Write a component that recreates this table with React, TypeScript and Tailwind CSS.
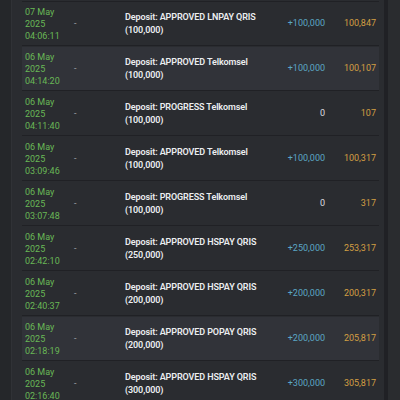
import React from 'react';

type Row = {
  day: string;
  time: string;
  desc: string;
  nominal: string;
  amount: string;
  balance: string;
  active?: boolean;
};

const rows: Row[] = [
  { day: '07 May', time: '04:06:11', desc: 'Deposit: APPROVED LNPAY QRIS', nominal: '(100,000)', amount: '+100,000', balance: '100,847' },
  { day: '06 May', time: '04:14:20', desc: 'Deposit: APPROVED Telkomsel', nominal: '(100,000)', amount: '+100,000', balance: '100,107', active: true },
  { day: '06 May', time: '04:11:40', desc: 'Deposit: PROGRESS Telkomsel', nominal: '(100,000)', amount: '0', balance: '107' },
  { day: '06 May', time: '03:09:46', desc: 'Deposit: APPROVED Telkomsel', nominal: '(100,000)', amount: '+100,000', balance: '100,317' },
  { day: '06 May', time: '03:07:48', desc: 'Deposit: PROGRESS Telkomsel', nominal: '(100,000)', amount: '0', balance: '317' },
  { day: '06 May', time: '02:42:10', desc: 'Deposit: APPROVED HSPAY QRIS', nominal: '(250,000)', amount: '+250,000', balance: '253,317' },
  { day: '06 May', time: '02:40:37', desc: 'Deposit: APPROVED HSPAY QRIS', nominal: '(200,000)', amount: '+200,000', balance: '200,317' },
  { day: '06 May', time: '02:18:19', desc: 'Deposit: APPROVED POPAY QRIS', nominal: '(200,000)', amount: '+200,000', balance: '205,817', active: true },
  { day: '06 May', time: '02:16:40', desc: 'Deposit: APPROVED HSPAY QRIS', nominal: '(300,000)', amount: '+300,000', balance: '305,817' },
];

function HistoryRow({ row }: { row: Row }) {
  return (
    <div
      className={`flex items-center h-[44px] shrink-0 border-b border-[#202125] ${
        row.active ? 'bg-[#313339]' : 'bg-[#2a2c30]'
      }`}
    >
      <div className="w-[48px] pl-[3px] text-[9px] leading-[12px] text-[#69b856]">
        <div>{row.day}</div>
        <div>2025</div>
        <div>{row.time}</div>
      </div>
      <div className="w-[55px] pl-[4px] text-[9px] text-[#a3a5aa]">-</div>
      <div className="flex-1 text-[9px] leading-[13px] font-semibold tracking-[-0.1px] text-[#eceef0]">
        <div>{row.desc}</div>
        <div>{row.nominal}</div>
      </div>
      <div
        className={`w-[60px] text-right text-[9px] ${
          row.amount === '0' ? 'text-[#dcdde0]' : 'text-[#5ba6c4]'
        }`}
      >
        {row.amount}
      </div>
      <div className="w-[51px] text-right text-[9px] text-[#d39f43]">{row.balance}</div>
      <div className="w-[3px]" />
    </div>
  );
}

export default function App() {
  return (
    <div
      className="w-[400px] h-[400px] overflow-hidden flex bg-[#25272a]"
      style={{ fontFamily: 'Roboto, "Noto Sans", sans-serif' }}
    >
      <div className="w-[11px] shrink-0" />
      <div className="w-[373px] shrink-0 border-l border-[#303236] bg-[#2a2c30] pl-[10px] pr-[5px] pt-[1px]">
        <div className="flex flex-col border-t border-[#202125] gap-[1px]">
          {rows.map((row, i) => (
            <HistoryRow key={i} row={row} />
          ))}
        </div>
      </div>
      <div className="w-[4px] shrink-0 bg-[#202125]" />
      <div className="flex-1 bg-[#2a2c2f]" />
    </div>
  );
}
